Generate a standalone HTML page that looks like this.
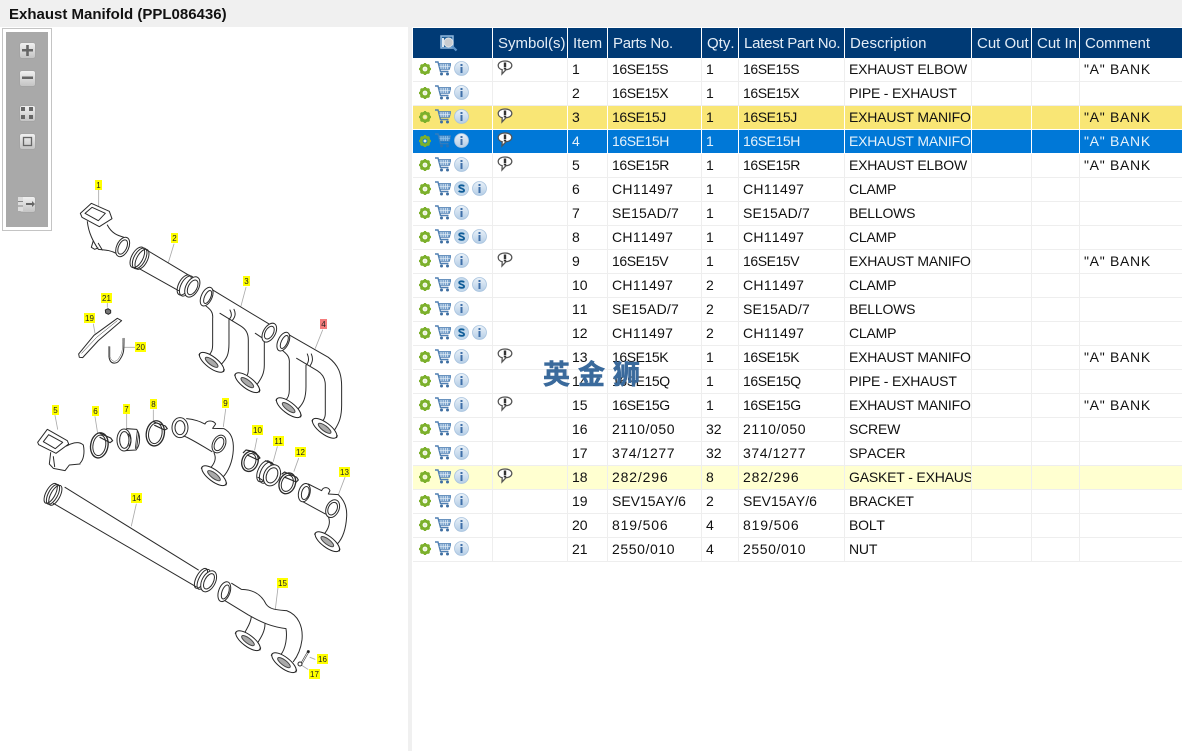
<!DOCTYPE html>
<html><head><meta charset="utf-8"><title>Exhaust Manifold</title>
<style>
html,body{margin:0;padding:0;width:1182px;height:751px;overflow:hidden;background:#fff;font-family:"Liberation Sans","Noto Sans CJK SC",sans-serif}
#title{position:absolute;left:0;top:0;width:1182px;height:27px;background:#f0f0f0;font-weight:bold;font-size:15px;line-height:29px;color:#111;text-indent:9px}
#split{position:absolute;left:408px;top:27px;width:4px;height:724px;background:#f0f0f0}
#tb{position:absolute;left:2px;top:28px;width:42px;height:195px;border:1px solid #c4c4c4;padding:3px;background:#fff}
#tb div{width:42px;height:195px;background:#a9a9a9}
.b{position:absolute;width:15px;height:15px;background:linear-gradient(#f0f0f0,#c4c4c4);border-radius:2px;box-shadow:0 0 1px #888}
#dia{position:absolute;left:0;top:0}
table{position:absolute;left:413px;top:28px;border-collapse:collapse;table-layout:fixed;width:769px;font-kerning:none}
th{background:#003a75;color:#e4edf6;font-weight:normal;font-size:15px;height:29px;padding:1px 0 0 5.5px;text-align:left;border-right:1px solid #fff;overflow:hidden;white-space:nowrap}
td{height:23px;padding:0 0 0 4.5px;font-size:14px;color:#111;border-right:1px solid #eee;border-bottom:1px solid #eee;overflow:hidden;white-space:nowrap;line-height:22px;vertical-align:top}
td.a{letter-spacing:-.43px}td.b2{letter-spacing:.3px}td.c2{letter-spacing:.2px}td.d{letter-spacing:.6px}td.e{letter-spacing:.85px}
td.ds{letter-spacing:-.2px}td.cm{letter-spacing:.7px}
td.ic{padding:0}
tr.y td{background:#f9e675;border-right-color:#fff;border-bottom-color:#fff}
tr.s td{background:#0078d7;color:#e6f2fb;border-right-color:#fff;border-bottom-color:#fff}
tr.c td{background:#ffffd0}
svg.g,svg.t,svg.i,svg.S,svg.m{float:left}
svg.g{width:12px;height:12px;margin-left:6px;margin-top:5px}
svg.t{width:16px;height:15px;margin-left:4px;margin-top:3px}
svg.i,svg.S{width:15px;height:15px;margin-left:3px;margin-top:3px}
svg.m{width:16px;height:16px;margin-left:4px;margin-top:2px}
tr.s svg.t{opacity:.65}
#wm{position:absolute;left:543px;top:356px;font-size:27px;line-height:38px;font-weight:bold;letter-spacing:8px;color:#3a6a9c;white-space:nowrap;-webkit-text-stroke:.6px #3a6a9c;font-family:"Liberation Sans","Noto Sans CJK SC",sans-serif}
</style></head><body>
<svg width="0" height="0" style="position:absolute"><defs>
<symbol id="g" viewBox="0 0 12 12"><circle cx="6" cy="6" r="3.900" fill="none" stroke="#7cb02c" stroke-width="3"/><path d="M6 0v2M6 10v2M0 6h2M10 6h2M1.700 1.700l1.400 1.400M8.900 8.900l1.400 1.400M1.700 10.300l1.400-1.400M8.900 3.100l1.400-1.400" stroke="#7cb02c" stroke-width="2"/><circle cx="6" cy="6" r="1.500" fill="#e6f1cf"/></symbol>
<symbol id="t" viewBox="0 0 16 15"><path d="M0 1h3l2.500 9.500h8" fill="none" stroke="#4f7fb2" stroke-width="1.400"/><path d="M3.500 2.500H16l-1.600 5.800H5z" fill="#7ea6cf" stroke="#4f7fb2" stroke-width=".8"/><path d="M6 3v5M8.200 3v5M10.400 3v5M12.600 3v5M4.500 5.300h10.600" stroke="#e4eef7" stroke-width=".7"/><circle cx="6.500" cy="13" r="1.500" fill="#3f6fa2"/><circle cx="12.500" cy="13" r="1.500" fill="#3f6fa2"/></symbol>
<symbol id="i" viewBox="0 0 15 15"><defs><linearGradient id="lg" x1="0" y1="0" x2="0" y2="1"><stop offset="0" stop-color="#eaf1f8"/><stop offset="1" stop-color="#b4cde6"/></linearGradient></defs><circle cx="7.500" cy="7.500" r="7" fill="url(#lg)" stroke="#a9c4df" stroke-width=".8"/><rect x="6.500" y="3" width="2" height="2" fill="#3f6fa8"/><rect x="6.500" y="6" width="2" height="6" fill="#3f6fa8"/></symbol>
<symbol id="S" viewBox="0 0 15 15"><circle cx="7.500" cy="7.500" r="7" fill="#c4d9ec" stroke="#a9c4df" stroke-width=".8"/><path d="M10 5.400C9.500 4 5.300 3.800 5.200 5.700c-.1 2 5 1.500 4.900 3.700-.1 2-4.500 1.700-5.200.3" fill="none" stroke="#0f5c98" stroke-width="1.800"/></symbol>
<symbol id="m" viewBox="0 0 16 16"><path d="M8 1C4 1 1.200 2.800 1.200 5.500c0 2.300 2 3.800 4 4.200L5 14l4-4.300c3.200-.2 5.800-1.800 5.800-4.200C14.800 2.800 12 1 8 1z" fill="#fff" stroke="#555" stroke-width="1.300"/><rect x="6.800" y="2.500" width="2.400" height="4.500" fill="#333"/><rect x="6.800" y="7.600" width="2.400" height="1.900" fill="#333"/></symbol>
<g id="fl"><ellipse rx="44" ry="17" transform="rotate(37)" fill="#fff" stroke="#222"/><ellipse rx="23" ry="8" transform="rotate(37)" fill="#aaa" stroke="#444" stroke-width="3"/><path d="M-38-22l2-4M38 22l-2 6" stroke="#222"/></g>
</defs></svg>
<div id="title">Exhaust Manifold (PPL086436)</div>
<div id="split"></div>
<div id="tb"><div></div></div>
<div class="b" style="left:20px;top:43px"></div>
<div class="b" style="left:20px;top:71px"></div>
<div class="b" style="left:20px;top:106px"></div>
<div class="b" style="left:20px;top:134px"></div>
<div class="b" style="left:20px;top:197px"></div>
<svg style="position:absolute;left:0;top:0" width="60" height="230" fill="#666">
<path d="M22 49h11v2.500H22zM26.200 45h2.600v11h-2.600z"/><path d="M22 76.500h11v2.500H22z"/>
<path d="M21 107h4v4h-4zM29 107h4v4h-4zM21 115h4v4h-4zM29 115h4v4h-4z"/>
<rect x="23.500" y="137.500" width="8" height="8" fill="none" stroke="#666" stroke-width="1.300"/>
<path d="M26 203h6v-2l3 3-3 3v-2h-6z"/><path d="M18 197h5v14h-5z" fill="#ddd"/><path d="M18 201.500h5M18 206h5" stroke="#888"/>
</svg>

<svg id="dia" width="410" height="751" fill="none" stroke="#2a2a2a" stroke-linejoin="round" stroke-linecap="round">
<g transform="translate(30 170) scale(.3333)" stroke-width="3">
<g stroke="#aaa" stroke-width="2.500"><path d="M206 60V108M432 222L415 278M648 352L633 408M878 480L856 535M232 400v12M190 462l5 28M316 532H284M75 736l8 42M195 740l8 50M290 732v45M370 720v35M587 718l-7 52"/></g>
<path d="M151 130L184 100 238 124 246 146 208 170 156 142Z"/><path d="M165 130L186 112 226 130 205 152Z"/><path d="M172 155C176 190 190 215 205 238 225 240 240 240 258 250M232 165C245 190 262 196 282 202M190 212l-6 20 10 6 10-4M205 220l12 20"/>
<ellipse cx="278" cy="231" rx="18" ry="31" transform="rotate(25 278 231)"/><ellipse cx="278" cy="231" rx="12" ry="23" transform="rotate(25 278 231)"/>
<path d="M350 240L475 315M328 296L446 362"/>
<g><ellipse cx="322" cy="262" rx="17" ry="34" transform="rotate(28 322 262)"/><ellipse cx="329" cy="265" rx="17" ry="34" transform="rotate(28 329 265)"/><ellipse cx="336" cy="268" rx="16" ry="33" transform="rotate(28 336 268)"/></g>
<g><ellipse cx="463" cy="345" rx="17" ry="33" transform="rotate(28 463 345)"/><ellipse cx="470" cy="348" rx="17" ry="33" transform="rotate(28 470 348)"/><ellipse cx="487" cy="351" rx="19" ry="33" transform="rotate(28 487 351)" fill="#fff"/><ellipse cx="488" cy="352" rx="13" ry="24" transform="rotate(28 488 352)"/></g>
<ellipse cx="530" cy="380" rx="16" ry="30" transform="rotate(25 530 380)" fill="#fff"/><ellipse cx="533" cy="381" rx="9" ry="21" transform="rotate(25 533 381)"/>
<path d="M548 360L722 465M528 408C540 418 550 425 548 445V522C548 540 545 548 535 558M570 430L632 468C648 478 655 490 655 510V600C655 615 648 622 640 628M600 420C606 432 606 440 597 448V520C597 555 590 565 575 582M612 418C618 430 616 442 606 452M676 490L703 508V585C703 610 695 625 680 645"/>
<ellipse cx="718" cy="488" rx="18" ry="31" transform="rotate(30 718 488)" fill="#fff"/><ellipse cx="718" cy="488" rx="12" ry="21" transform="rotate(30 718 488)"/>
<use href="#fl" x="545" y="577"/><use href="#fl" x="652" y="638"/>
<ellipse cx="760" cy="515" rx="16" ry="30" transform="rotate(25 760 515)" fill="#fff"/><ellipse cx="763" cy="516" rx="9" ry="21" transform="rotate(25 763 516)"/>
<path d="M778 495L895 562C925 585 935 610 935 650V705C935 740 928 758 915 778M758 542C770 552 780 560 778 580V660C778 675 775 685 765 692M800 565L862 602C878 612 886 625 886 645V730C886 745 880 752 870 760M832 552C838 566 836 578 828 586V650C828 685 820 700 805 716M844 552C850 566 848 576 840 588"/>
<use href="#fl" x="776" y="713"/><use href="#fl" x="884" y="775"/>
<path d="M146 552L192 496 262 445 275 452 205 512 158 563 148 562Z"/><path d="M155 550L200 502 262 452" stroke-width="1.500"/>
<path d="M237 530V560C240 585 262 585 272 565 282 550 282 540 282 505" stroke-width="3"/><path d="M240 530V560C245 578 260 578 268 562 278 548 278 535 278 505" stroke-width="1.200"/>
<path d="M226 420l8-4 8 5v8l-7 4-8-4z" fill="#777"/>
</g>
<g transform="translate(30 400) scale(.3333)" stroke-width="3">
<g stroke="#aaa" stroke-width="2.500"><path d="M319 312L304 378M745 555L736 628M681 115L674 150M742 140L730 184M806 175L792 214M945 232L926 282M855 778L840 772M834 808L812 794"/></g>
<path d="M23 127L52 88 112 122 116 132 78 160 26 134Z"/><path d="M40 125L56 104 98 127 76 146Z"/>
<path d="M62 158L58 192 70 205 105 212 118 195 150 192M110 138C120 132 145 120 160 135 165 160 160 180 150 190M70 170L74 200"/>
<ellipse cx="208" cy="136" rx="26" ry="38" transform="rotate(10 208 136)" stroke-width="4"/><ellipse cx="208" cy="136" rx="19" ry="31" transform="rotate(10 208 136)"/><path d="M210 100l32 14 6 8-8 6-30-16" stroke-width="3.500"/>
<path d="M290 86L320 88C332 105 332 135 318 150L285 152"/><path d="M322 92L316 146M326 100L320 144" stroke-width="2.500"/><ellipse cx="282" cy="120" rx="21" ry="33" fill="#fff"/><ellipse cx="283" cy="120" rx="14" ry="25"/><path d="M295 102c10 12 10 24 2 36"/>
<ellipse cx="376" cy="100" rx="27" ry="38" transform="rotate(10 376 100)" stroke-width="4"/><ellipse cx="376" cy="100" rx="20" ry="31" transform="rotate(10 376 100)"/><path d="M372 66l34 12 6 8-8 4-30-14" stroke-width="3.500"/>
<ellipse cx="450" cy="83" rx="24" ry="30" fill="#fff"/><ellipse cx="450" cy="83" rx="15" ry="21"/>
<path d="M470 56C495 58 510 65 525 72 530 60 550 60 557 72L548 85 582 86C600 95 612 115 610 150 608 185 595 215 578 232M462 108C490 120 520 140 546 155M552 158C560 175 555 190 538 208"/>
<ellipse cx="567" cy="132" rx="19" ry="28" transform="rotate(25 567 132)" fill="#fff"/><ellipse cx="567" cy="132" rx="13" ry="21" transform="rotate(25 567 132)"/>
<use href="#fl" x="552" y="227"/>
<ellipse cx="660" cy="184" rx="24" ry="31" transform="rotate(20 660 184)" stroke-width="4"/><ellipse cx="660" cy="184" rx="17" ry="24" transform="rotate(20 660 184)"/><path d="M640 158l8-8 12 2 24 14 6 8-8 5-30-14" stroke-width="3.500"/>
<path d="M706 182L746 200M684 232L722 256"/><ellipse cx="702" cy="214" rx="18" ry="34" transform="rotate(25 702 214)"/><ellipse cx="710" cy="218" rx="18" ry="34" transform="rotate(25 710 218)"/><ellipse cx="726" cy="226" rx="24" ry="33" transform="rotate(25 726 226)" fill="#fff"/><ellipse cx="726" cy="226" rx="16" ry="24" transform="rotate(25 726 226)"/>
<ellipse cx="772" cy="250" rx="24" ry="32" transform="rotate(20 772 250)" stroke-width="4"/><ellipse cx="772" cy="250" rx="17" ry="25" transform="rotate(20 772 250)"/><path d="M756 222l8-6 36 16 5 8-6 6-34-14" stroke-width="3.500"/>
<ellipse cx="823" cy="278" rx="17" ry="28" transform="rotate(15 823 278)" fill="#fff"/><ellipse cx="826" cy="279" rx="11" ry="20" transform="rotate(15 826 279)"/>
<path d="M835 252L875 272C880 260 895 260 900 272L895 282 925 284C942 300 952 320 950 350 948 385 938 415 922 432M820 306L886 342M895 350C902 365 898 385 880 405"/>
<ellipse cx="908" cy="326" rx="19" ry="28" transform="rotate(25 908 326)" fill="#fff"/><ellipse cx="908" cy="326" rx="13" ry="20" transform="rotate(25 908 326)"/>
<use href="#fl" x="892" y="425"/>
<path d="M105 262L505 510M70 310L498 560"/>
<ellipse cx="62" cy="280" rx="14" ry="33" transform="rotate(28 62 280)"/><ellipse cx="69" cy="283" rx="14" ry="33" transform="rotate(28 69 283)"/><ellipse cx="76" cy="286" rx="14" ry="33" transform="rotate(28 76 286)"/>
<ellipse cx="513" cy="535" rx="14" ry="33" transform="rotate(28 513 535)"/><ellipse cx="521" cy="538" rx="14" ry="33" transform="rotate(28 521 538)"/><ellipse cx="536" cy="544" rx="20" ry="34" transform="rotate(28 536 544)" fill="#fff"/><ellipse cx="537" cy="544" rx="13" ry="25" transform="rotate(28 537 544)"/>
<ellipse cx="583" cy="575" rx="17" ry="31" transform="rotate(20 583 575)" fill="#fff"/><ellipse cx="586" cy="576" rx="10" ry="22" transform="rotate(20 586 576)"/>
<path d="M605 550L634 568C670 568 695 585 708 612 720 630 745 630 770 632 805 645 820 680 816 720 812 750 802 770 790 785M585 602L655 645C700 670 725 680 768 686 772 710 768 745 752 765M664 650C662 672 650 685 645 697M705 672C705 692 695 710 682 730"/>
<use href="#fl" x="654" y="722"/><use href="#fl" x="762" y="788"/>
<path d="M835 755L815 790" stroke-width="6" stroke="#333"/><path d="M835 755L815 790" stroke-width="2.500" stroke="#fff"/><circle cx="810" cy="792" r="6" fill="#fff"/><circle cx="835" cy="755" r="3" fill="#222"/>
</g>
<g font-family="Liberation Sans" font-size="8" stroke="none" fill="#222" text-anchor="middle">
<g fill="#ffff00"><rect x="95" y="180" width="7" height="10"/><rect x="171" y="233" width="7" height="10"/><rect x="243" y="276" width="7" height="10"/><rect x="52" y="405" width="7" height="10"/><rect x="92" y="406" width="7" height="10"/><rect x="123" y="404" width="7" height="10"/><rect x="150" y="399" width="7" height="10"/><rect x="222" y="398" width="7" height="10"/><rect x="252" y="425" width="11" height="10"/><rect x="273" y="436" width="11" height="10"/><rect x="295" y="447" width="11" height="10"/><rect x="339" y="467" width="11" height="10"/><rect x="131" y="493" width="11" height="10"/><rect x="277" y="578" width="11" height="10"/><rect x="317" y="654" width="11" height="10"/><rect x="309" y="669" width="11" height="10"/><rect x="84" y="313" width="11" height="10"/><rect x="135" y="342" width="11" height="10"/><rect x="101" y="293" width="11" height="10"/></g>
<rect x="320" y="319" width="7" height="10" fill="#f47c7c"/>
<text x="98.500" y="188">1</text><text x="174.500" y="241">2</text><text x="246.500" y="284">3</text><text x="323.500" y="327">4</text><text x="55.500" y="413">5</text><text x="95.500" y="414">6</text><text x="126.500" y="412">7</text><text x="153.500" y="407">8</text><text x="225.500" y="406">9</text><text x="257.500" y="433">10</text><text x="278.500" y="444">11</text><text x="300.500" y="455">12</text><text x="344.500" y="475">13</text><text x="136.500" y="501">14</text><text x="282.500" y="586">15</text><text x="322.500" y="662">16</text><text x="314.500" y="677">17</text><text x="89.500" y="321">19</text><text x="140.500" y="350">20</text><text x="106.500" y="301">21</text>
</g>
</svg>

<table>
<colgroup><col style="width:79px"><col style="width:75px"><col style="width:40px"><col style="width:94px"><col style="width:37px"><col style="width:106px"><col style="width:127px"><col style="width:60px"><col style="width:48px"><col style="width:103px"></colgroup>
<tr><th style="padding:0"><svg width="20" height="18" style="display:block;margin:2px 0 0 27px" fill="none"><rect x="1" y="1" width="12" height="12" fill="#1d5d97" stroke="#8fb8de" stroke-width="1.500"/><path d="M2 3h2v9H2z" fill="#dfe9f2"/><circle cx="8.500" cy="7.500" r="4.500" fill="#c9ccd0" stroke="#e0e4e8"/><path d="M12 11l4.500 4.500" stroke="#5c93c8" stroke-width="2.200"/></svg></th><th>Symbol(s)</th><th>Item</th><th style="letter-spacing:-.3px">Parts No.</th><th>Qty.</th><th style="letter-spacing:-.25px">Latest Part No.</th><th style="letter-spacing:.15px">Description</th><th>Cut Out</th><th>Cut In</th><th>Comment</th></tr>
<tr><td class="ic"><svg class="g"><use href="#g"/></svg><svg class="t"><use href="#t"/></svg><svg class="i"><use href="#i"/></svg></td><td class="ic"><svg class="m"><use href="#m"/></svg></td><td>1</td><td class="a">16SE15S</td><td>1</td><td class="a">16SE15S</td><td class="ds">EXHAUST ELBOW</td><td></td><td></td><td class="cm">"A" BANK</td></tr>
<tr><td class="ic"><svg class="g"><use href="#g"/></svg><svg class="t"><use href="#t"/></svg><svg class="i"><use href="#i"/></svg></td><td class="ic"></td><td>2</td><td class="a">16SE15X</td><td>1</td><td class="a">16SE15X</td><td class="ds">PIPE - EXHAUST</td><td></td><td></td><td></td></tr>
<tr class="y"><td class="ic"><svg class="g"><use href="#g"/></svg><svg class="t"><use href="#t"/></svg><svg class="i"><use href="#i"/></svg></td><td class="ic"><svg class="m"><use href="#m"/></svg></td><td>3</td><td class="a">16SE15J</td><td>1</td><td class="a">16SE15J</td><td class="ds">EXHAUST MANIFOLD</td><td></td><td></td><td class="cm">"A" BANK</td></tr>
<tr class="s"><td class="ic"><svg class="g"><use href="#g"/></svg><svg class="t"><use href="#t"/></svg><svg class="i"><use href="#i"/></svg></td><td class="ic"><svg class="m"><use href="#m"/></svg></td><td>4</td><td class="a">16SE15H</td><td>1</td><td class="a">16SE15H</td><td class="ds">EXHAUST MANIFOLD</td><td></td><td></td><td class="cm">"A" BANK</td></tr>
<tr><td class="ic"><svg class="g"><use href="#g"/></svg><svg class="t"><use href="#t"/></svg><svg class="i"><use href="#i"/></svg></td><td class="ic"><svg class="m"><use href="#m"/></svg></td><td>5</td><td class="a">16SE15R</td><td>1</td><td class="a">16SE15R</td><td class="ds">EXHAUST ELBOW</td><td></td><td></td><td class="cm">"A" BANK</td></tr>
<tr><td class="ic"><svg class="g"><use href="#g"/></svg><svg class="t"><use href="#t"/></svg><svg class="S"><use href="#S"/></svg><svg class="i"><use href="#i"/></svg></td><td class="ic"></td><td>6</td><td class="b2">CH11497</td><td>1</td><td class="b2">CH11497</td><td class="ds">CLAMP</td><td></td><td></td><td></td></tr>
<tr><td class="ic"><svg class="g"><use href="#g"/></svg><svg class="t"><use href="#t"/></svg><svg class="i"><use href="#i"/></svg></td><td class="ic"></td><td>7</td><td class="c2">SE15AD/7</td><td>1</td><td class="c2">SE15AD/7</td><td class="ds">BELLOWS</td><td></td><td></td><td></td></tr>
<tr><td class="ic"><svg class="g"><use href="#g"/></svg><svg class="t"><use href="#t"/></svg><svg class="S"><use href="#S"/></svg><svg class="i"><use href="#i"/></svg></td><td class="ic"></td><td>8</td><td class="b2">CH11497</td><td>1</td><td class="b2">CH11497</td><td class="ds">CLAMP</td><td></td><td></td><td></td></tr>
<tr><td class="ic"><svg class="g"><use href="#g"/></svg><svg class="t"><use href="#t"/></svg><svg class="i"><use href="#i"/></svg></td><td class="ic"><svg class="m"><use href="#m"/></svg></td><td>9</td><td class="a">16SE15V</td><td>1</td><td class="a">16SE15V</td><td class="ds">EXHAUST MANIFOLD</td><td></td><td></td><td class="cm">"A" BANK</td></tr>
<tr><td class="ic"><svg class="g"><use href="#g"/></svg><svg class="t"><use href="#t"/></svg><svg class="S"><use href="#S"/></svg><svg class="i"><use href="#i"/></svg></td><td class="ic"></td><td>10</td><td class="b2">CH11497</td><td>2</td><td class="b2">CH11497</td><td class="ds">CLAMP</td><td></td><td></td><td></td></tr>
<tr><td class="ic"><svg class="g"><use href="#g"/></svg><svg class="t"><use href="#t"/></svg><svg class="i"><use href="#i"/></svg></td><td class="ic"></td><td>11</td><td class="c2">SE15AD/7</td><td>2</td><td class="c2">SE15AD/7</td><td class="ds">BELLOWS</td><td></td><td></td><td></td></tr>
<tr><td class="ic"><svg class="g"><use href="#g"/></svg><svg class="t"><use href="#t"/></svg><svg class="S"><use href="#S"/></svg><svg class="i"><use href="#i"/></svg></td><td class="ic"></td><td>12</td><td class="b2">CH11497</td><td>2</td><td class="b2">CH11497</td><td class="ds">CLAMP</td><td></td><td></td><td></td></tr>
<tr><td class="ic"><svg class="g"><use href="#g"/></svg><svg class="t"><use href="#t"/></svg><svg class="i"><use href="#i"/></svg></td><td class="ic"><svg class="m"><use href="#m"/></svg></td><td>13</td><td class="a">16SE15K</td><td>1</td><td class="a">16SE15K</td><td class="ds">EXHAUST MANIFOLD</td><td></td><td></td><td class="cm">"A" BANK</td></tr>
<tr><td class="ic"><svg class="g"><use href="#g"/></svg><svg class="t"><use href="#t"/></svg><svg class="i"><use href="#i"/></svg></td><td class="ic"></td><td>14</td><td class="a">16SE15Q</td><td>1</td><td class="a">16SE15Q</td><td class="ds">PIPE - EXHAUST</td><td></td><td></td><td></td></tr>
<tr><td class="ic"><svg class="g"><use href="#g"/></svg><svg class="t"><use href="#t"/></svg><svg class="i"><use href="#i"/></svg></td><td class="ic"><svg class="m"><use href="#m"/></svg></td><td>15</td><td class="a">16SE15G</td><td>1</td><td class="a">16SE15G</td><td class="ds">EXHAUST MANIFOLD</td><td></td><td></td><td class="cm">"A" BANK</td></tr>
<tr><td class="ic"><svg class="g"><use href="#g"/></svg><svg class="t"><use href="#t"/></svg><svg class="i"><use href="#i"/></svg></td><td class="ic"></td><td>16</td><td class="d">2110/050</td><td>32</td><td class="d">2110/050</td><td class="ds">SCREW</td><td></td><td></td><td></td></tr>
<tr><td class="ic"><svg class="g"><use href="#g"/></svg><svg class="t"><use href="#t"/></svg><svg class="i"><use href="#i"/></svg></td><td class="ic"></td><td>17</td><td class="d">374/1277</td><td>32</td><td class="d">374/1277</td><td class="ds">SPACER</td><td></td><td></td><td></td></tr>
<tr class="c"><td class="ic"><svg class="g"><use href="#g"/></svg><svg class="t"><use href="#t"/></svg><svg class="i"><use href="#i"/></svg></td><td class="ic"><svg class="m"><use href="#m"/></svg></td><td>18</td><td class="e">282/296</td><td>8</td><td class="e">282/296</td><td class="ds">GASKET - EXHAUST</td><td></td><td></td><td></td></tr>
<tr><td class="ic"><svg class="g"><use href="#g"/></svg><svg class="t"><use href="#t"/></svg><svg class="i"><use href="#i"/></svg></td><td class="ic"></td><td>19</td><td>SEV15AY/6</td><td>2</td><td>SEV15AY/6</td><td class="ds">BRACKET</td><td></td><td></td><td></td></tr>
<tr><td class="ic"><svg class="g"><use href="#g"/></svg><svg class="t"><use href="#t"/></svg><svg class="i"><use href="#i"/></svg></td><td class="ic"></td><td>20</td><td class="e">819/506</td><td>4</td><td class="e">819/506</td><td class="ds">BOLT</td><td></td><td></td><td></td></tr>
<tr><td class="ic"><svg class="g"><use href="#g"/></svg><svg class="t"><use href="#t"/></svg><svg class="i"><use href="#i"/></svg></td><td class="ic"></td><td>21</td><td class="d">2550/010</td><td>4</td><td class="d">2550/010</td><td class="ds">NUT</td><td></td><td></td><td></td></tr>
</table>
<div id="wm">英金狮</div>
</body></html>
